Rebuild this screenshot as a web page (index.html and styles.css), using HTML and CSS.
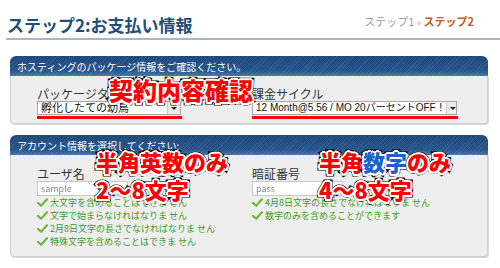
FILE: index.html
```html
<!DOCTYPE html>
<html lang="ja">

<head>
    <meta charset="UTF-8">
    <title>ステップ2:お支払い情報</title>
    <link rel="stylesheet" href="styles.css">
</head>

<body>
    <div class="page">
        <div class="top">
            <h1>ステップ2:お支払い情報</h1>
            <div class="crumbs"><span class="done">ステップ1</span> <span class="sep">»</span> <span class="now">ステップ2</span></div>
        </div>

        <div class="panel">
            <div class="panel-head">ホスティングのパッケージ情報をご確認ください。</div>
            <div class="panel-body cols">
                <div class="field">
                    <label>パッケージタイプ</label>
                    <div class="select sel-left"><span>孵化したての幼鳥</span><i class="arrow"></i></div>
                    <div class="mark"></div>
                </div>
                <div class="field">
                    <label>課金サイクル</label>
                    <div class="select sel-right"><span>12 Month@5.56 / MO 20パーセントOFF！</span><i class="arrow"></i></div>
                    <div class="mark"></div>
                </div>
            </div>
        </div>

        <div class="panel second">
            <div class="panel-head">アカウント情報を選択してください:</div>
            <div class="panel-body cols tall">
                <div class="field">
                    <label>ユーザ名</label>
                    <div class="input"><span class="blur">sample</span></div>
                    <ul class="rules">
                        <li><svg viewBox="0 0 12 10"><path d="M1 5.5 L4.5 8.5 L11 1.5" /></svg>大文字を含めることはできま せん</li>
                        <li><svg viewBox="0 0 12 10"><path d="M1 5.5 L4.5 8.5 L11 1.5" /></svg>文字で始まらなければなりま せん</li>
                        <li><svg viewBox="0 0 12 10"><path d="M1 5.5 L4.5 8.5 L11 1.5" /></svg>2月8日文字の長さでなければなりま せん</li>
                        <li><svg viewBox="0 0 12 10"><path d="M1 5.5 L4.5 8.5 L11 1.5" /></svg>特殊文字を含めることはできま せん</li>
                    </ul>
                </div>
                <div class="field">
                    <label>暗証番号</label>
                    <div class="input"><span class="blur">pass</span></div>
                    <ul class="rules">
                        <li><svg viewBox="0 0 12 10"><path d="M1 5.5 L4.5 8.5 L11 1.5" /></svg>4月8日文字の長さでなければなりま せん</li>
                        <li><svg viewBox="0 0 12 10"><path d="M1 5.5 L4.5 8.5 L11 1.5" /></svg>数字のみを含めることができます</li>
                    </ul>
                </div>
            </div>
        </div>

        <!-- 注釈 -->
        <div class="note note-1">契約内容確認</div>
        <div class="note note-2">半角英数のみ<br>2〜8文字</div>
        <div class="note note-3">半角<span class="blue">数字</span>のみ<br>4〜8文字</div>
    </div>
</body>

</html>
```

FILE: styles.css
```css
body {
    margin: 0;
    padding: 0;
    font-family: "Noto Sans CJK JP", "Noto Sans", sans-serif;
    background-color: #fff;
}

.page {
    position: relative;
    width: 500px;
    height: 268px;
    overflow: hidden;
}

/* Header */
.top {
    display: flex;
    justify-content: space-between;
    align-items: flex-end;
    height: 38px;
    margin-left: 6px;
    padding: 0 26px 0 1px;
    border-bottom: 2px solid #a8b6c9;
}

h1 {
    margin: 0 0 2px;
    font-size: 17px;
    line-height: 22px;
    font-weight: bold;
    color: #244d7c;
}

.crumbs {
    margin-bottom: 8px;
    font-size: 11px;
    line-height: 14px;
}

.crumbs .done {
    color: #9a9a9a;
}

.crumbs .sep {
    color: #b0b0b0;
    font-size: 9px;
}

.crumbs .now {
    color: #c4592c;
    font-weight: bold;
}

/* Panels */
.panel {
    margin: 16px 12px 0 10px;
}

.panel.second {
    margin-top: 11px;
}

.panel-head {
    height: 20px;
    padding-left: 7px;
    border-radius: 6px 6px 0 0;
    color: #fff;
    font-size: 10px;
    line-height: 21px;
    background:
        repeating-linear-gradient(-45deg, rgba(255, 255, 255, 0.07) 0 1px, transparent 1px 3px),
        linear-gradient(#1b4678, #24548a 75%, #4b76a6);
}

.panel-body {
    background-color: #eeeeee;
    border: 1px solid #cfcfcf;
    border-top: 0;
    border-radius: 0 0 4px 4px;
    box-shadow: 1px 1px 0 #d8d8d8;
}

.cols {
    display: grid;
    grid-template-columns: 215px 1fr;
    height: 48px;
    padding-left: 26px;
    box-sizing: border-box;
}

.cols.tall {
    height: 102px;
}

.field {
    display: flex;
    flex-direction: column;
    align-items: flex-start;
    padding-top: 11px;
}

label {
    font-size: 12px;
    line-height: 13px;
    color: #333;
}

.select {
    display: flex;
    align-items: center;
    justify-content: space-between;
    height: 14px;
    margin-top: 1px;
    box-sizing: border-box;
    padding-left: 3px;
    background-color: #fff;
    border: 1px solid #a5a5a5;
    font-family: "Liberation Sans", "Noto Sans CJK JP", sans-serif;
    font-size: 11px;
    line-height: 12px;
    color: #111;
    white-space: nowrap;
    overflow: hidden;
}

.sel-right {
    font-size: 10px;
}

.sel-left {
    width: 144px;
}

.sel-right {
    width: 205px;
}

.arrow {
    position: relative;
    flex: none;
    width: 12px;
    height: 12px;
    border-left: 1px solid #c6c6c6;
    background-color: #ececec;
}

.arrow::after {
    content: "";
    position: absolute;
    left: 3px;
    top: 5px;
    border-left: 3px solid transparent;
    border-right: 3px solid transparent;
    border-top: 3px solid #222;
}

.mark {
    height: 3px;
    margin-top: 1px;
    background-color: #f00;
}

.field:first-child .mark {
    width: 145px;
}

.field:last-child .mark {
    width: 206px;
}

.tall .field {
    padding-top: 12px;
}

.input {
    width: 91px;
    height: 15px;
    margin-top: 1px;
    box-sizing: border-box;
    padding-left: 3px;
    background-color: #fff;
    border: 1px solid #c8c8c8;
    font-size: 9px;
    line-height: 13px;
}

.blur {
    color: #8a8a8a;
    filter: blur(0.7px);
}

.rules {
    list-style: none;
    margin: 0;
    padding: 0;
}

.rules li {
    display: flex;
    align-items: center;
    height: 13px;
    font-size: 9px;
    color: #3d9b21;
}

.rules svg {
    width: 11px;
    height: 9px;
    margin-right: 2px;
}

.rules path {
    fill: none;
    stroke: #69b83a;
    stroke-width: 2.4;
    stroke-linecap: round;
}

/* Annotations laid over the form */
.note {
    position: absolute;
    font-weight: 900;
    font-size: 22px;
    line-height: 28px;
    color: #ff0000;
    -webkit-text-stroke: 5px #000;
    paint-order: stroke fill;
    text-shadow: 1.5px 1.5px 0 #fff, -1.5px -1.5px 0 #fff, 1.5px -1.5px 0 #fff, -1.5px 1.5px 0 #fff, 0 2px 0 #fff, 0 -2px 0 #fff, 2px 0 0 #fff, -2px 0 0 #fff;
    white-space: nowrap;
}

.note-1 {
    left: 109px;
    top: 76px;
    font-size: 24px;
}

.note-2 {
    left: 96px;
    top: 147px;
}

.note-3 {
    left: 319px;
    top: 147px;
}

.note .blue {
    color: #1a63c8;
}
```
